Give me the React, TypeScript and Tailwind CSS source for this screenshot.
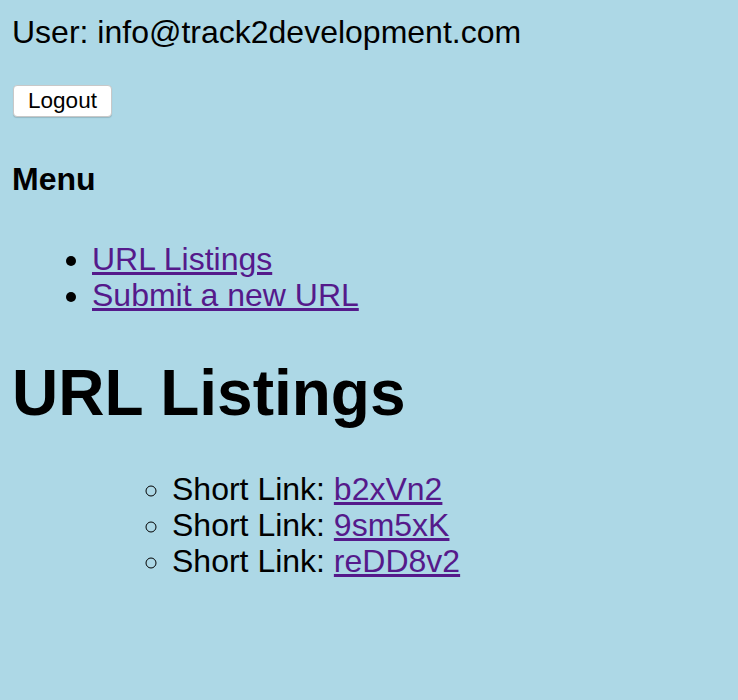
const menuLinks = ["URL Listings", "Submit a new URL"];
const shortLinks = ["b2xVn2", "9sm5xK", "reDD8v2"];

export default function App() {
  return (
    <div className="min-h-screen bg-[#add8e6] px-[12px] pt-[14px] font-['Liberation_Sans',Arial,sans-serif] text-[32px] leading-[36px] text-black">
      <div>User: info@track2development.com</div>

      <button className="mt-[35px] ml-[1px] block h-[32px] w-[99px] rounded-[4px] border border-[#c8c8c8] bg-white text-[22.5px] leading-[30px] text-black shadow-[0_1px_1px_rgba(0,0,0,0.15)]">
        Logout
      </button>

      <h4 className="mt-[44px] font-bold">Menu</h4>

      <ul className="mt-[44px] list-disc pl-[80px]">
        {menuLinks.map((label) => (
          <li key={label}>
            <a href="#" className="text-[#551a8b] underline">
              {label}
            </a>
          </li>
        ))}
      </ul>

      <h1 className="mt-[43px] text-[64px] font-bold leading-[74px]">
        URL Listings
      </h1>

      <ul className="mt-[41px] list-[circle] pl-[160px]">
        {shortLinks.map((code) => (
          <li key={code}>
            Short Link:{" "}
            <a href="#" className="text-[#551a8b] underline">
              {code}
            </a>
          </li>
        ))}
      </ul>
    </div>
  );
}
